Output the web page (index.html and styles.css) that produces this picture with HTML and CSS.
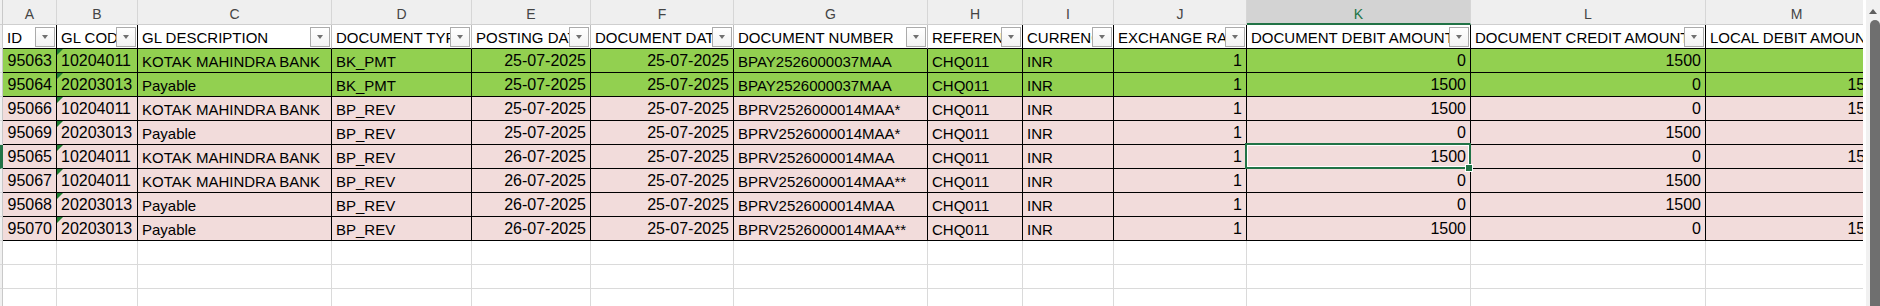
FILE: index.html
```html
<!DOCTYPE html>
<html>
<head>
<meta charset="utf-8">
<link rel="stylesheet" href="styles.css">
</head>
<body>
<div class="window">
  <div class="sheet">
    <div class="row letters">
      <div class="rh"></div>
      <div class="lc">A</div><div class="lc">B</div><div class="lc">C</div><div class="lc">D</div><div class="lc">E</div><div class="lc">F</div><div class="lc">G</div><div class="lc">H</div><div class="lc">I</div><div class="lc">J</div><div class="lc sel">K</div><div class="lc">L</div><div class="lc">M</div>
    </div>
    <div class="row hdr">
      <div class="rh"></div>
      <div class="c h dk"><span class="t">ID</span><span class="fb"></span></div>
      <div class="c h dk"><span class="t">GL CODE</span><span class="fb"></span></div>
      <div class="c h lt"><span class="t">GL DESCRIPTION</span><span class="fb"></span></div>
      <div class="c h lt"><span class="t">DOCUMENT TYPE</span><span class="fb"></span></div>
      <div class="c h lt"><span class="t">POSTING DATE</span><span class="fb"></span></div>
      <div class="c h lt"><span class="t">DOCUMENT DATE</span><span class="fb"></span></div>
      <div class="c h lt"><span class="t">DOCUMENT NUMBER</span><span class="fb"></span></div>
      <div class="c h dk"><span class="t">REFERENCE</span><span class="fb"></span></div>
      <div class="c h dk"><span class="t">CURRENCY</span><span class="fb"></span></div>
      <div class="c h dk"><span class="t">EXCHANGE RATE</span><span class="fb"></span></div>
      <div class="c h dk"><span class="t">DOCUMENT DEBIT AMOUNT</span><span class="fb"></span></div>
      <div class="c h dk"><span class="t">DOCUMENT CREDIT AMOUNT</span><span class="fb"></span></div>
      <div class="c h dk"><span class="t">LOCAL DEBIT AMOUNT</span><span class="fb"></span></div>
    </div>

    <div class="row green">
      <div class="rh"></div>
      <div class="c r">95063</div><div class="c n err">10204011</div><div class="c">KOTAK MAHINDRA BANK</div><div class="c">BK_PMT</div><div class="c r">25-07-2025</div><div class="c r">25-07-2025</div><div class="c">BPAY2526000037MAA</div><div class="c">CHQ011</div><div class="c">INR</div><div class="c r">1</div><div class="c r">0</div><div class="c r">1500</div><div class="c r">0</div>
    </div>
    <div class="row green">
      <div class="rh"></div>
      <div class="c r">95064</div><div class="c n err">20203013</div><div class="c">Payable</div><div class="c">BK_PMT</div><div class="c r">25-07-2025</div><div class="c r">25-07-2025</div><div class="c">BPAY2526000037MAA</div><div class="c">CHQ011</div><div class="c">INR</div><div class="c r">1</div><div class="c r">1500</div><div class="c r">0</div><div class="c r">1500</div>
    </div>
    <div class="row pink">
      <div class="rh"></div>
      <div class="c r">95066</div><div class="c n err">10204011</div><div class="c">KOTAK MAHINDRA BANK</div><div class="c">BP_REV</div><div class="c r">25-07-2025</div><div class="c r">25-07-2025</div><div class="c">BPRV2526000014MAA*</div><div class="c">CHQ011</div><div class="c">INR</div><div class="c r">1</div><div class="c r">1500</div><div class="c r">0</div><div class="c r">1500</div>
    </div>
    <div class="row pink">
      <div class="rh"></div>
      <div class="c r">95069</div><div class="c n err">20203013</div><div class="c">Payable</div><div class="c">BP_REV</div><div class="c r">25-07-2025</div><div class="c r">25-07-2025</div><div class="c">BPRV2526000014MAA*</div><div class="c">CHQ011</div><div class="c">INR</div><div class="c r">1</div><div class="c r">0</div><div class="c r">1500</div><div class="c r">0</div>
    </div>
    <div class="row pink">
      <div class="rh rsel"></div>
      <div class="c r">95065</div><div class="c n err">10204011</div><div class="c">KOTAK MAHINDRA BANK</div><div class="c">BP_REV</div><div class="c r">26-07-2025</div><div class="c r">25-07-2025</div><div class="c">BPRV2526000014MAA</div><div class="c">CHQ011</div><div class="c">INR</div><div class="c r">1</div><div class="c r active">1500<span class="selbox"></span><span class="handle"></span></div><div class="c r">0</div><div class="c r">1500</div>
    </div>
    <div class="row pink">
      <div class="rh"></div>
      <div class="c r">95067</div><div class="c n err">10204011</div><div class="c">KOTAK MAHINDRA BANK</div><div class="c">BP_REV</div><div class="c r">26-07-2025</div><div class="c r">25-07-2025</div><div class="c">BPRV2526000014MAA**</div><div class="c">CHQ011</div><div class="c">INR</div><div class="c r">1</div><div class="c r">0</div><div class="c r">1500</div><div class="c r">0</div>
    </div>
    <div class="row pink">
      <div class="rh"></div>
      <div class="c r">95068</div><div class="c n err">20203013</div><div class="c">Payable</div><div class="c">BP_REV</div><div class="c r">26-07-2025</div><div class="c r">25-07-2025</div><div class="c">BPRV2526000014MAA</div><div class="c">CHQ011</div><div class="c">INR</div><div class="c r">1</div><div class="c r">0</div><div class="c r">1500</div><div class="c r">0</div>
    </div>
    <div class="row pink">
      <div class="rh"></div>
      <div class="c r">95070</div><div class="c n err">20203013</div><div class="c">Payable</div><div class="c">BP_REV</div><div class="c r">26-07-2025</div><div class="c r">25-07-2025</div><div class="c">BPRV2526000014MAA**</div><div class="c">CHQ011</div><div class="c">INR</div><div class="c r">1</div><div class="c r">1500</div><div class="c r">0</div><div class="c r">1500</div>
    </div>

    <div class="row empty">
      <div class="rh"></div>
      <div class="c"></div><div class="c"></div><div class="c"></div><div class="c"></div><div class="c"></div><div class="c"></div><div class="c"></div><div class="c"></div><div class="c"></div><div class="c"></div><div class="c"></div><div class="c"></div><div class="c"></div>
    </div>
    <div class="row empty">
      <div class="rh"></div>
      <div class="c"></div><div class="c"></div><div class="c"></div><div class="c"></div><div class="c"></div><div class="c"></div><div class="c"></div><div class="c"></div><div class="c"></div><div class="c"></div><div class="c"></div><div class="c"></div><div class="c"></div>
    </div>
    <div class="row empty">
      <div class="rh"></div>
      <div class="c"></div><div class="c"></div><div class="c"></div><div class="c"></div><div class="c"></div><div class="c"></div><div class="c"></div><div class="c"></div><div class="c"></div><div class="c"></div><div class="c"></div><div class="c"></div><div class="c"></div>
    </div>
  </div>
  <div class="vscroll">
    <div class="up"></div>
    <div class="thumb"></div>
  </div>
</div>
</body>
</html>
```

FILE: styles.css
```css
html, body {
  margin: 0;
  padding: 0;
  background: #ffffff;
  overflow: hidden;
  height: 100%;
}

.window {
  display: grid;
  grid-template-columns: minmax(0, 1fr) 17px;
  width: 100%;
  height: 306px;
  overflow: hidden;
}

.sheet {
  min-width: 0;
  overflow: hidden;
  font-family: "Liberation Sans", Arial, sans-serif;
  font-size: 15px;
  color: #000;
}

.row {
  display: grid;
  grid-template-columns: 3px 54px 81px 194px 140px 119px 143px 194px 95px 91px 133px 224px 235px 182px;
  width: 1889px;
}

/* row-header strip at far left */
.rh {
  background: #f0f0f0;
  border-right: 1px solid #c9c9c9;
  border-bottom: 1px solid #d9d9d9;
  box-sizing: border-box;
}
.rh.rsel {
  background: #d2d2d2;
  border-left: 2px solid #217346;
  border-right: 1px solid #217346;
}

/* column letters row */
.letters {
  height: 25px;
}
.letters .rh {
  border-bottom: 1px solid #cfcfcf;
}
.lc {
  box-sizing: border-box;
  height: 25px;
  background: #efefef;
  border-right: 1px solid #d6d6d6;
  border-bottom: 1px solid #cfcfcf;
  text-align: center;
  font-size: 14px;
  line-height: 24px;
  padding-top: 2px;
  color: #444444;
}
.lc.sel {
  background: #d3d3d3;
  color: #217346;
  border-bottom: 2px solid #217346;
}

/* generic cell */
.c {
  box-sizing: border-box;
  height: 24px;
  line-height: 23px;
  padding: 1px 4px 0 4px;
  border-right: 1px solid #000;
  border-bottom: 1px solid #000;
  white-space: nowrap;
  overflow: hidden;
}
.c.r {
  text-align: right;
  font-size: 16px;
  padding-top: 0;
}
.c.n {
  font-size: 16px;
  padding-top: 0;
}

/* header row with filter buttons */
.hdr .c {
  background: #ffffff;
  display: flex;
  align-items: center;
  padding: 1px 1px 0 4px;
}
.hdr .c.lt {
  border-right-color: #bdbdbd;
}
.hdr .rh {
  border-bottom-color: #d9d9d9;
}
.hdr .t {
  flex: 1;
  min-width: 0;
  overflow: hidden;
  white-space: nowrap;
}
.fb {
  flex: none;
  width: 20px;
  height: 20px;
  box-sizing: border-box;
  margin-top: -1px;
  border: 1px solid #ababab;
  background: linear-gradient(#ffffff, #f2f2f2);
  display: flex;
  align-items: center;
  justify-content: center;
}
.fb::after {
  content: "";
  width: 0;
  height: 0;
  border-left: 3.5px solid transparent;
  border-right: 3.5px solid transparent;
  border-top: 4px solid #707070;
}

.green .c {
  background: #92d050;
}
.pink .c {
  background: #f2dcdb;
}

/* green error indicator */
.c.err {
  position: relative;
}
.c.err::before {
  content: "";
  position: absolute;
  top: 0;
  left: 0;
  width: 0;
  height: 0;
  border-top: 6px solid #1e7d32;
  border-right: 6px solid transparent;
}

/* active cell selection */
.c.active {
  position: relative;
  overflow: visible;
  z-index: 2;
}
.selbox {
  position: absolute;
  left: -2px;
  top: -2px;
  right: -1px;
  bottom: -1px;
  border: 2px solid #217346;
  box-shadow: inset 0 0 0 1px #ffffff;
  pointer-events: none;
}
.handle {
  position: absolute;
  right: -3px;
  bottom: -4px;
  width: 6px;
  height: 6px;
  background: #217346;
  border: 1px solid #ffffff;
  box-sizing: content-box;
}

/* empty rows */
.empty .c {
  border-right-color: #dadada;
  border-bottom-color: #dadada;
  background: #ffffff;
}
.empty .rh {
  border-bottom-color: #d9d9d9;
}

/* vertical scrollbar */
.vscroll {
  height: 306px;
  box-sizing: border-box;
  background: #f1f1f1;
  border-left: 3px solid #ffffff;
  overflow: hidden;
}
.up {
  width: 0;
  height: 0;
  margin: 9px 0 0 3px;
  border-left: 4px solid transparent;
  border-right: 4px solid transparent;
  border-bottom: 5px solid #5f5f5f;
}
.thumb {
  width: 10px;
  height: 286px;
  margin: 6px 0 0 4px;
  background: #6f6f6f;
  border-radius: 5px 5px 0 0;
}
```
